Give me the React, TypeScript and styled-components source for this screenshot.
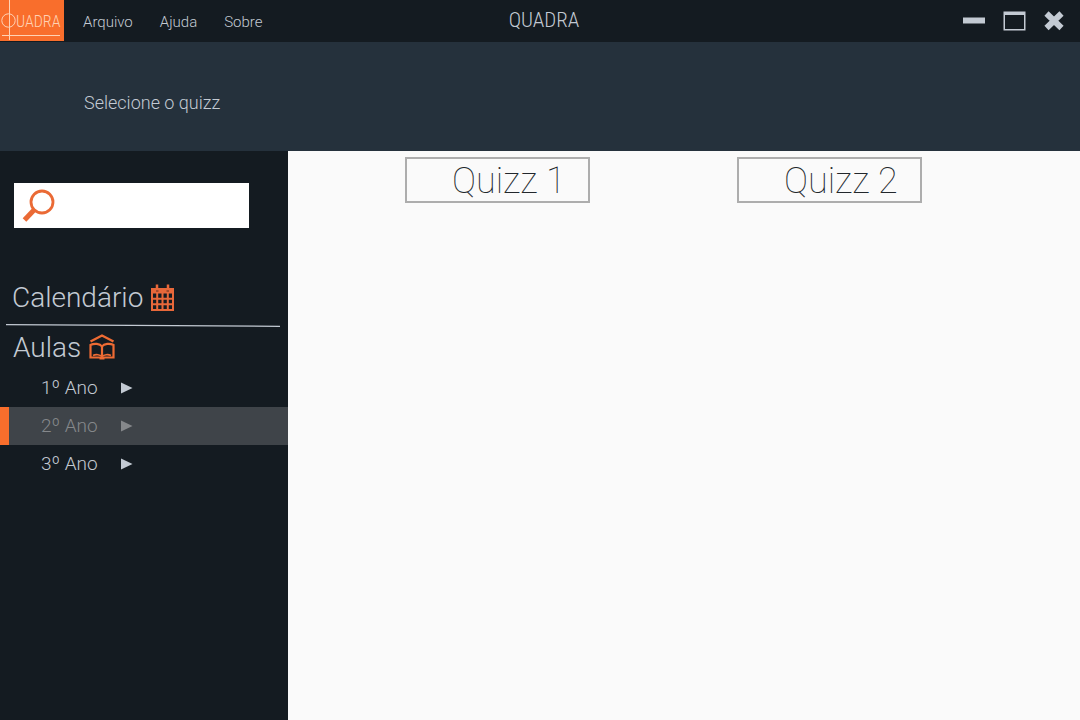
import React from "react";
import styled, { createGlobalStyle } from "styled-components";

const colors = {
  ink: "#141b21",
  band: "#25313c",
  text: "#c3cad3",
  orange: "#f96e2c",
  page: "#fafafa",
};

const GlobalStyle = createGlobalStyle`
  *, *::before, *::after { box-sizing: border-box; }
  body {
    margin: 0;
    background: ${colors.page};
    color: ${colors.text};
    font-family: Roboto, "Liberation Sans", sans-serif;
    font-weight: 300;
  }
  button, input { font: inherit; color: inherit; }
`;

const Shell = styled.div`
  display: flex;
  flex-direction: column;
  min-height: 100vh;
`;

const TitleBar = styled.header`
  display: grid;
  grid-template-columns: 1fr auto 1fr;
  align-items: center;
  height: 42px;
  background: ${colors.ink};
`;

const BarStart = styled.div`
  display: flex;
  align-items: center;
  height: 42px;
`;

const Logo = styled.a`
  width: 64px;
  height: 41px;
  align-self: flex-start;
  background: ${colors.orange};
  color: #ffd2b4;
`;

const LogoArt = styled.svg`
  display: block;
`;

const Menu = styled.nav`
  display: flex;
  gap: 27px;
  margin-left: 19px;
  padding-top: 2px;
`;

const MenuButton = styled.button`
  padding: 0;
  border: 0;
  background: none;
  font-size: 15px;
  line-height: 20px;
`;

const Title = styled.h1`
  margin: 0;
  padding: 0 0 2px 8px;
  font-family: "Roboto Condensed", Roboto, sans-serif;
  font-size: 21px;
  font-weight: 300;
  line-height: 24px;
`;

const WindowControls = styled.div`
  display: flex;
  justify-content: flex-end;
  gap: 16px;
  padding-right: 14px;
`;

const WindowButton = styled.button`
  display: flex;
  padding: 0;
  border: 0;
  background: none;
`;

const Banner = styled.div`
  display: flex;
  align-items: center;
  height: 109px;
  padding: 12px 84px 0;
  background: ${colors.band};
`;

const BannerText = styled.p`
  margin: 0;
  font-size: 18px;
  line-height: 24px;
`;

const Body = styled.div`
  display: flex;
  flex: 1;
`;

const Sidebar = styled.aside`
  flex: 0 0 288px;
  padding-top: 32px;
  background: ${colors.ink};
`;

const SearchBox = styled.label`
  display: flex;
  align-items: center;
  width: 235px;
  height: 45px;
  margin-left: 14px;
  padding: 0 8px;
  gap: 8px;
  background: #fff;
`;

const SearchInput = styled.input`
  flex: 1;
  min-width: 0;
  border: 0;
  outline: 0;
  background: none;
  color: ${colors.ink};
  font-size: 18px;
`;

const Section = styled.h2<{ $first?: boolean }>`
  display: flex;
  align-items: center;
  gap: 8px;
  margin: ${(p) => (p.$first ? "52px 0 0" : "0")};
  padding-left: ${(p) => (p.$first ? 12 : 13)}px;
  font-size: 28px;
  font-weight: 300;
  line-height: 36px;
`;

const Divider = styled.svg`
  display: block;
  width: 274px;
  height: 4px;
  margin: 8px 0 2px 6px;
`;

const YearList = styled.ul`
  margin: 3px 0 0;
  padding: 0;
  list-style: none;
`;

const YearButton = styled.button<{ $active?: boolean }>`
  display: flex;
  align-items: center;
  gap: 23px;
  width: 100%;
  height: 38px;
  padding: 0 0 0 ${(p) => (p.$active ? 32 : 41)}px;
  border: 0;
  border-left: ${(p) => (p.$active ? `9px solid ${colors.orange}` : "0")};
  background: ${(p) => (p.$active ? "#3f4449" : "none")};
  color: ${(p) => (p.$active ? "#85888b" : colors.text)};
  font-size: 19px;
  line-height: 24px;
`;

const Main = styled.main`
  display: flex;
  flex: 1;
  flex-wrap: wrap;
  align-content: flex-start;
  gap: 16px 147px;
  padding: 6px 0 0 117px;
  background: ${colors.page};
`;

const QuizButton = styled.button`
  width: 185px;
  height: 46px;
  padding: 2px 0 0 45px;
  border: 2px solid #adadad;
  background: none;
  color: #22272c;
  font-size: 36px;
  font-weight: 100;
  line-height: 40px;
  text-align: left;
  white-space: nowrap;
`;

const Arrow = () => (
  <svg width="12" height="12" viewBox="0 0 12 12" fill="currentColor" aria-hidden="true">
    <path d="M0 0.500 11.500 6 0 11.500z" />
  </svg>
);

const SearchIcon = () => (
  <svg width="33" height="34" viewBox="0 0 33 34" fill="none" stroke="#ea6a35" aria-hidden="true">
    <circle cx="20" cy="13" r="11" strokeWidth="2.8" />
    <path d="M12.500 20.500 2.500 31" strokeWidth="5" />
  </svg>
);

const CalendarIcon = () => (
  <svg width="23" height="28" viewBox="0 0 23 28" fill="none" stroke="#e8683a" aria-hidden="true">
    <path d="M0 4h23v5.500H0z" fill="#e8683a" stroke="none" />
    <path d="M6 0.500v6M17 0.500v6" strokeWidth="2.500" />
    <path d="M5 7h2.500M15.500 7h2.500" stroke="#8a4028" strokeWidth="1.500" />
    <path d="M1 9v17h21V9M6.200 9v17M11.500 9v17M16.800 9v17M1 14.800h21M1 20.300h21" strokeWidth="2" />
  </svg>
);

const LessonsIcon = () => (
  <svg width="27" height="28" viewBox="0 0 27 28" fill="none" stroke="#ee6b33" aria-hidden="true">
    <path d="M1.500 7.500 13 1.500 24.500 7.500" strokeWidth="2.400" />
    <path
      d="M13 12.500C11 9.500 5 9 1.500 11V23.500H24.500V11C21 9 15 9.500 13 12.500V23"
      strokeWidth="2.200"
    />
    <path d="M4 21.500C7 20 11 20.500 13 22.500 15 20.500 19 20 22 21.500" strokeWidth="1.600" />
    <path d="M10.500 24.500h5" strokeWidth="2" />
  </svg>
);

const years = ["1º Ano", "2º Ano", "3º Ano"];
const quizzes = ["Quizz 1", "Quizz 2"];

export default function App() {
  return (
    <Shell>
      <GlobalStyle />
      <TitleBar>
        <BarStart>
          <Logo href="#" aria-label="Quadra">
            <LogoArt width="64" height="41" viewBox="0 0 64 41" fill="none" stroke="currentColor">
              <circle cx="8.500" cy="20.500" r="6.700" />
              <path d="M9.500 0v40M2 35.500h58" />
              <text x="16" y="27" fill="currentColor" stroke="none" fontFamily="Roboto Condensed, Roboto, sans-serif" fontWeight="300" fontSize="16">
                UADRA
              </text>
            </LogoArt>
          </Logo>
          <Menu>
            <MenuButton>Arquivo</MenuButton>
            <MenuButton>Ajuda</MenuButton>
            <MenuButton>Sobre</MenuButton>
          </Menu>
        </BarStart>
        <Title>QUADRA</Title>
        <WindowControls>
          <WindowButton aria-label="Minimizar">
            <svg width="24" height="22" viewBox="0 0 24 22" fill="#c3cad3">
              <path d="M1 7.500h22v6H1z" />
            </svg>
          </WindowButton>
          <WindowButton aria-label="Maximizar">
            <svg width="24" height="22" viewBox="0 0 24 22" fill="#c3cad3" fillRule="evenodd">
              <path d="M1.500 1.500h22v19H1.500zM3 5v14h19V5z" />
            </svg>
          </WindowButton>
          <WindowButton aria-label="Fechar">
            <svg width="24" height="22" viewBox="0 0 24 22" stroke="#c3cad3" strokeWidth="6">
              <path d="M4.500 3.500 19.500 18M19.500 3.500 4.500 18" />
            </svg>
          </WindowButton>
        </WindowControls>
      </TitleBar>
      <Banner>
        <BannerText>Selecione o quizz</BannerText>
      </Banner>
      <Body>
        <Sidebar>
          <SearchBox>
            <SearchIcon />
            <SearchInput type="search" aria-label="Pesquisar" />
          </SearchBox>
          <Section $first>
            Calendário <CalendarIcon />
          </Section>
          <Divider viewBox="0 0 274 4" preserveAspectRatio="none" aria-hidden="true">
            <path d="M0 0.700 274 2.300" stroke={colors.text} strokeWidth="1.300" />
          </Divider>
          <Section>
            Aulas <LessonsIcon />
          </Section>
          <YearList>
            {years.map((year, i) => (
              <li key={year}>
                <YearButton $active={i === 1}>
                  {year}
                  <Arrow />
                </YearButton>
              </li>
            ))}
          </YearList>
        </Sidebar>
        <Main>
          {quizzes.map((quiz) => (
            <QuizButton key={quiz}>{quiz}</QuizButton>
          ))}
        </Main>
      </Body>
    </Shell>
  );
}
